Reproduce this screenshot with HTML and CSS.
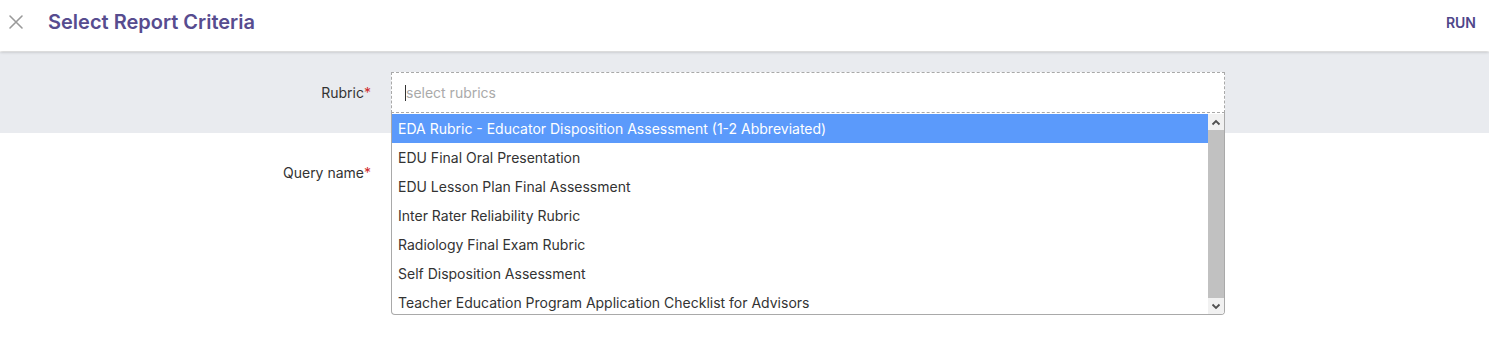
FILE: index.html
```html
<!DOCTYPE html>
<html>
<head>
<meta charset="utf-8">
<link rel="stylesheet" href="styles.css">
</head>
<body>
<header class="topbar">
  <div class="left">
    <svg class="close" width="16" height="16" viewBox="0 0 16 16"><path d="M2 2L14 14M14 2L2 14" stroke="#9a9a9a" stroke-width="1.6" stroke-linecap="round"/></svg>
    <h1 class="title">Select Report Criteria</h1>
  </div>
  <button class="run">RUN</button>
</header>
<main class="form">
  <div class="row row-gray">
    <label class="label">Rubric<span class="req">*</span></label>
    <div class="field">
      <div class="input"><span class="caret"></span><span class="ph">select rubrics</span></div>
      <div class="dropdown">
        <ul class="options">
          <li class="opt active">EDA Rubric - Educator Disposition Assessment (1-2 Abbreviated)</li>
          <li class="opt">EDU Final Oral Presentation</li>
          <li class="opt">EDU Lesson Plan Final Assessment</li>
          <li class="opt">Inter Rater Reliability Rubric</li>
          <li class="opt">Radiology Final Exam Rubric</li>
          <li class="opt">Self Disposition Assessment</li>
          <li class="opt">Teacher Education Program Application Checklist for Advisors</li>
        </ul>
        <div class="scrollbar">
          <div class="arrow"><svg width="10" height="7" viewBox="0 0 10 7"><path d="M1.5 5.5L5 2L8.5 5.5" fill="none" stroke="#505050" stroke-width="1.8"/></svg></div>
          <div class="track"><div class="thumb"></div></div>
          <div class="arrow"><svg width="10" height="7" viewBox="0 0 10 7"><path d="M1.5 1.5L5 5L8.5 1.5" fill="none" stroke="#505050" stroke-width="1.8"/></svg></div>
        </div>
      </div>
    </div>
  </div>
  <div class="row">
    <label class="label label-plain">Query name<span class="req">*</span></label>
    <div class="field"></div>
  </div>
</main>
</body>
</html>
```
FILE: styles.css
```css
* { box-sizing: border-box; }
html, body { margin: 0; padding: 0; background: #fff; }
body { font-family: Inter, "Noto Sans", sans-serif; color: #333; width: 1489px; height: 351px; overflow: hidden; }

.topbar {
  height: 51px;
  display: flex;
  align-items: center;
  justify-content: space-between;
  padding: 0 13px 0 8px;
  background: #fff;
  box-shadow: 0 1px 3px rgba(0,0,0,0.22);
  position: relative;
  z-index: 2;
}
.left { display: flex; align-items: center; }
.close { display: block; margin-top: -8px; }
.title {
  margin: -8px 0 0 24px;
  font-size: 20px;
  font-weight: 600;
  color: #574c8f;
}
.run {
  border: none;
  background: none;
  padding: 0;
  margin-top: -7px;
  font-family: Inter, "Noto Sans", sans-serif;
  font-size: 14px;
  font-weight: 600;
  color: #4f468a;
}

.form { display: flex; flex-direction: column; }
.row {
  display: flex;
  align-items: flex-start;
  gap: 20px;
  padding: 20px 0;
}
.row-gray { background: #e9ebef; margin-top: 1px; }
.label {
  width: 371px;
  flex: none;
  text-align: right;
  font-size: 14px;
  color: #333;
  line-height: 41px;
}
.label-plain { line-height: 40px; }
.req { color: #d02b2b; }
.field { width: 834px; position: relative; }

.input {
  height: 41px;
  border: 1px dashed #a9a9a9;
  background: #fff;
  display: flex;
  align-items: center;
  padding-left: 13px;
  font-size: 14px;
}
.caret { width: 1px; height: 16px; background: #333; }
.ph { color: #aaa; }

.dropdown {
  position: absolute;
  top: 41px;
  left: 0;
  width: 834px;
  height: 202px;
  background: #fff;
  border: 1px solid #a9a9a9;
  border-top: none;
  border-radius: 0 0 4px 4px;
  padding-top: 1px;
  display: flex;
  overflow: hidden;
  z-index: 3;
}
.options {
  list-style: none;
  margin: 0;
  padding: 0;
  flex: 1;
}
.opt {
  height: 29px;
  line-height: 29px;
  padding-left: 6px;
  font-size: 14px;
  color: #333;
  white-space: nowrap;
}
.opt.active { background: #5b9afb; color: #fff; }

.scrollbar {
  width: 16px;
  flex: none;
  display: flex;
  flex-direction: column;
  background: #f1f1f1;
}
.arrow {
  height: 16px;
  display: flex;
  align-items: center;
  justify-content: center;
  background: #f1f1f1;
}
.track { flex: 1; display: flex; }
.thumb { flex: 1; background: #c1c1c1; }
```
